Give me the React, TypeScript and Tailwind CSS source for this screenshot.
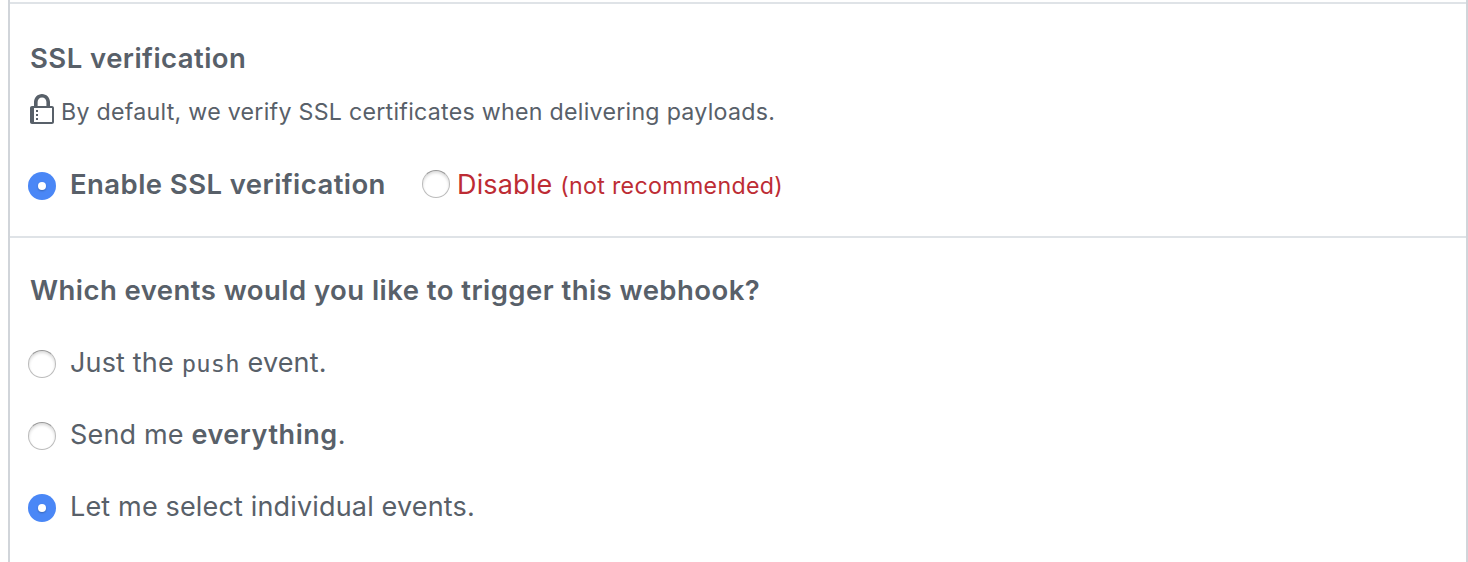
import type { ReactNode } from "react";

function Radio({ checked = false }: { checked?: boolean }) {
  return (
    <span
      role="radio"
      aria-checked={checked}
      className={
        checked
          ? "flex size-7 shrink-0 items-center justify-center rounded-full bg-[#4a87f6]"
          : "flex size-7 shrink-0 rounded-full border border-[#bcbcbc] border-t-[#989898] bg-white shadow-[inset_0_2px_3px_rgba(0,0,0,0.14)]"
      }
    >
      {checked && <span className="size-2 rounded-full bg-white shadow-[0_1px_2px_rgba(0,0,0,0.25)]" />}
    </span>
  );
}

function LockIcon() {
  return (
    <svg width="24" height="32" viewBox="0 0 12 16" fill="#586069" className="shrink-0">
      <path
        fillRule="evenodd"
        d="M4 13H3v-1h1v1zm8-6v7c0 .55-.45 1-1 1H1c-.55 0-1-.45-1-1V7c0-.55.45-1 1-1h1V4c0-2.2 1.8-4 4-4s4 1.8 4 4v2h1c.55 0 1 .45 1 1zM3.8 6h4.41V4c0-1.22-.98-2.2-2.2-2.2-1.22 0-2.2.98-2.2 2.2v2H3.8zM11 7H2v7h9V7zM4 8H3v1h1V8zm0 2H3v1h1v-1z"
      />
    </svg>
  );
}

function Heading({ children }: { children: ReactNode }) {
  return (
    <h2 className="pl-[2px] text-[27.5px] leading-7 font-semibold tracking-[0.45px] whitespace-nowrap">
      {children}
    </h2>
  );
}

function EventOption({ checked, children }: { checked?: boolean; children: ReactNode }) {
  return (
    <label className="flex h-7 items-center gap-[14px]">
      <Radio checked={checked} />
      <span className="-mt-[2px] text-[27px] leading-7 tracking-[0.16px] whitespace-nowrap">{children}</span>
    </label>
  );
}

export default function App() {
  return (
    <main className="h-[562px] overflow-hidden bg-white pl-2 font-['Inter',sans-serif] text-[#586069]">
      <div className="h-full border-x-2 border-[#d1d5da] pt-[2px]">
        <section className="h-[236px] border-y-2 border-[#dfe3e7] pt-[40px] pl-[18px]">
          <Heading>SSL verification</Heading>
          <p className="mt-[22px] flex h-8 items-start gap-[7px] pl-[2px]">
            <LockIcon />
            <span className="pt-[4px] text-[23.2px] leading-7 tracking-[0.265px] whitespace-nowrap">
              By default, we verify SSL certificates when delivering payloads.
            </span>
          </p>
          <div className="mt-[44px] flex h-7 items-start">
            <label className="flex items-start gap-[14px]">
              <span className="pt-[2px]">
                <Radio checked />
              </span>
              <span className="w-[316px] text-[27.5px] leading-7 font-semibold tracking-[0.43px] whitespace-nowrap">
                Enable SSL verification
              </span>
            </label>
            <label className="ml-9 flex items-start gap-[7px] text-[#bd2c34]">
              <Radio />
              <span className="pt-px text-[27px] leading-7 tracking-[0.16px] whitespace-nowrap">
                Disable <span className="text-[23.2px] tracking-[0.33px]">(not recommended)</span>
              </span>
            </label>
          </div>
        </section>
        <section className="pt-[38px] pl-[18px]">
          <Heading>Which events would you like to trigger this webhook?</Heading>
          <div className="mt-[46px] flex flex-col gap-11">
            <EventOption>
              Just the{" "}
              <code className="font-['DejaVu_Sans_Mono',monospace] text-[23.8px] tracking-[0.2px]">push</code>{" "}
              event.
            </EventOption>
            <EventOption>
              Send me <strong className="font-semibold tracking-[0.55px]">everything</strong>.
            </EventOption>
            <EventOption checked>Let me select individual events.</EventOption>
          </div>
        </section>
      </div>
    </main>
  );
}
